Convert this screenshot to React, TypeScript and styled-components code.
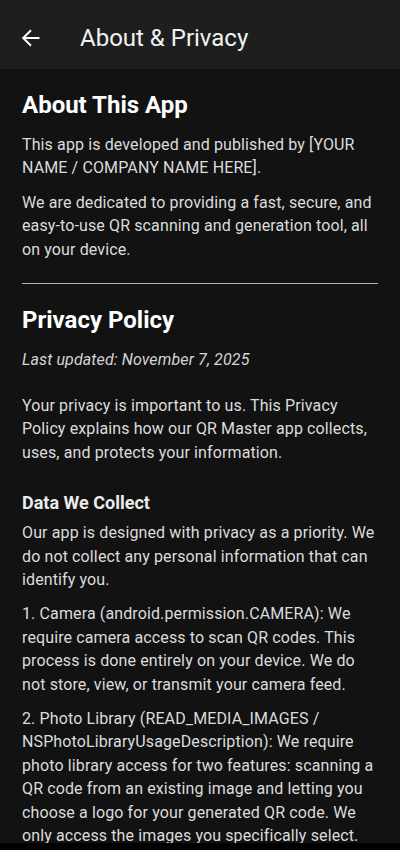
import React from 'react'
import styled, { createGlobalStyle } from 'styled-components'

const GlobalStyle = createGlobalStyle`
  html, body {
    margin: 0;
    padding: 0;
    background: #121212;
  }
  body {
    font-family: Roboto, "Noto Sans", sans-serif;
    -webkit-font-smoothing: antialiased;
  }
`

const Screen = styled.div`
  width: 400px;
  height: 850px;
  display: flex;
  flex-direction: column;
  overflow: hidden;
  background: #121212;
`

const AppBar = styled.header`
  flex: none;
  height: 69px;
  display: flex;
  align-items: center;
  padding-top: 6px;
  box-sizing: border-box;
  background: #1e1e1e;
`

const BackButton = styled.button`
  width: 62px;
  height: 48px;
  display: flex;
  align-items: center;
  padding: 0 0 0 21px;
  border: 0;
  background: none;
  color: #ffffff;
  box-sizing: border-box;
`

const Title = styled.h1`
  margin: 0 0 0 18px;
  font-size: 24px;
  font-weight: 400;
  color: #f2f2f2;
`

const Content = styled.main`
  flex: 1;
  min-height: 0;
  overflow: hidden;
  padding: 20px 22px 0;
`

const Heading = styled.h2`
  margin: 0 0 12px;
  font-size: 24px;
  line-height: 32px;
  font-weight: 700;
  color: #ffffff;
`

const SubHeading = styled.h3`
  margin: 0 0 5px;
  font-size: 18px;
  line-height: 26px;
  font-weight: 700;
  color: #ececec;
`

const Text = styled.p<{ $gap?: number }>`
  margin: 0 0 ${(p) => p.$gap ?? 11}px;
  font-size: 16px;
  line-height: 23.4px;
  color: #dcdcdc;
  letter-spacing: 0.12px;
`

const Updated = styled(Text)`
  font-style: italic;
  color: #d4d4d4;
`

const Divider = styled.hr`
  margin: 21.5px 0 20px;
  border: 0;
  height: 1px;
  background: #b4b4b4;
`

const NavBar = styled.div`
  flex: none;
  height: 7px;
  background: #000000;
`

const ArrowBack = () => (
  <svg width="20" height="20" viewBox="0 0 20 20" fill="none">
    <path
      d="M18.5 10H2.5M10 2.2L2.2 10l7.8 7.8"
      stroke="currentColor"
      strokeWidth="2"
    />
  </svg>
)

const App = () => {
  return (
    <>
      <GlobalStyle />
      <Screen>
        <AppBar>
          <BackButton aria-label="Back">
            <ArrowBack />
          </BackButton>
          <Title>About &amp; Privacy</Title>
        </AppBar>
        <Content>
          <Heading>About This App</Heading>
          <Text>
            This app is developed and published by [YOUR NAME / COMPANY NAME
            HERE].
          </Text>
          <Text $gap={0}>
            We are dedicated to providing a fast, secure, and easy-to-use QR
            scanning and generation tool, all on your device.
          </Text>
          <Divider />
          <Heading>Privacy Policy</Heading>
          <Updated $gap={23}>Last updated: November 7, 2025</Updated>
          <Text $gap={26}>
            Your privacy is important to us. This Privacy Policy explains how
            our QR Master app collects, uses, and protects your information.
          </Text>
          <SubHeading>Data We Collect</SubHeading>
          <Text>
            Our app is designed with privacy as a priority. We do not collect
            any personal information that can identify you.
          </Text>
          <Text>
            1. Camera (android.permission.CAMERA): We require camera access to
            scan QR codes. This process is done entirely on your device. We do
            not store, view, or transmit your camera feed.
          </Text>
          <Text>
            2. Photo Library (READ_MEDIA_IMAGES /
            NSPhotoLibraryUsageDescription): We require photo library access
            for two features: scanning a QR code from an existing image and
            letting you choose a logo for your generated QR code. We only
            access the images you specifically select.
          </Text>
        </Content>
        <NavBar />
      </Screen>
    </>
  )
}

export default App
